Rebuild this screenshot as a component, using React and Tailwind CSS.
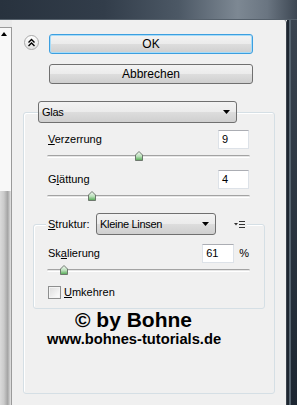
import React from 'react';

const btnBg =
  'bg-[linear-gradient(to_bottom,#f3f3f3_0%,#ebebeb_50%,#dddddd_51%,#cfcfcf_100%)]';

const ChevronsUp = () => (
  <svg width="9" height="9" viewBox="0 0 9 9" fill="none" stroke="#000" strokeWidth="1.4">
    <path d="M1.5 4.5 L4.5 1.5 L7.5 4.5" />
    <path d="M1.5 8 L4.5 5 L7.5 8" />
  </svg>
);

const DownArrow = () => (
  <svg width="7" height="4" viewBox="0 0 7 4">
    <path d="M0 0 H7 L3.5 4 Z" fill="#000" />
  </svg>
);

const MenuIcon = () => (
  <svg width="11" height="7" viewBox="0 0 11 7" className="block">
    <path d="M0 2 H4 L2 4.5 Z" fill="#333" />
    <rect x="5" y="0" width="6" height="1" fill="#333" />
    <rect x="5" y="3" width="6" height="1" fill="#333" />
    <rect x="5" y="6" width="6" height="1" fill="#333" />
  </svg>
);

const Thumb = () => (
  <svg width="8" height="10" viewBox="0 0 8 10" className="block">
    <defs>
      <linearGradient id="thumbFill" x1="0" y1="0" x2="0" y2="1">
        <stop offset="0" stopColor="#f6fbf6" />
        <stop offset="0.55" stopColor="#b9dfb9" />
        <stop offset="1" stopColor="#4fa84f" />
      </linearGradient>
    </defs>
    <path d="M4 0.5 L7.5 4 L7.5 9.5 L0.5 9.5 L0.5 4 Z" fill="url(#thumbFill)" stroke="#6e786e" />
  </svg>
);

// track is 203px wide, thumb travels over ~197px of it
const Slider = ({ value, min, max }) => {
  const center = 3 + ((value - min) / (max - min)) * 197;
  return (
    <div className="relative h-[14px]">
      <div className="absolute left-0 right-0 top-[6px] h-[3px] rounded-full border-t border-[#a3a3a3] bg-[#e6e6e6] border-b border-b-white" />
      <div className="absolute top-[2px]" style={{ left: center - 4 }}>
        <Thumb />
      </div>
    </div>
  );
};

const NumField = ({ value, w }) => (
  <div
    className={`${w} h-[19px] bg-white border border-[#dde2e8] border-t-[#abadb3] flex items-center pl-[3px]`}
  >
    {value}
  </div>
);

const Dropdown = ({ label, w }) => (
  <div
    className={`${w} h-[22px] ${btnBg} border border-[#707070] rounded-[3px] flex items-center justify-between pl-[3px] pr-[6px]`}
  >
    <span className="tracking-[-0.3px]">{label}</span>
    <DownArrow />
  </div>
);

export default function App() {
  return (
    <div className="w-[297px] h-[405px] overflow-hidden flex flex-col bg-[#f0f0f0] text-[11px] leading-[13px] text-black font-['Liberation_Sans',Arial,sans-serif]">
      {/* blurred window title area */}
      <div className="h-[20px] shrink-0 bg-[linear-gradient(90deg,#28323e_0%,#323d4a_35%,#4c5865_60%,#7d8893_80%,#6a7581_90%,#3d4753_100%)] border-b border-[#55606b]" />

      <div className="flex flex-1 min-h-0">
        {/* left strip */}
        <div className="w-[12px] flex flex-col">
          <div className="h-[7px] bg-[#ebebeb]" />
          <div className="flex-1 flex flex-col border-t border-r border-[#9a9a9a]">
            <div className="h-[163px] bg-[#f8f8f8]">
              <svg width="6" height="4" viewBox="0 0 6 4" className="block mt-[4px] ml-[1px]">
                <path d="M0 4 L3 0 L6 4 Z" fill="#000" />
              </svg>
            </div>
            <div className="flex-1 bg-[linear-gradient(90deg,#dadada_0%,#cbcbcb_35%,#a4a4a4_70%,#e4e4e4_100%)]" />
          </div>
        </div>

        {/* dialog */}
        <div className="w-[275px] border-r border-[#3b434c] rounded-tr-[3px] flex flex-col">
          <div className="flex pt-[14px] pl-[12px]">
            <div className="w-[15px] h-[15px] mt-[1px] rounded-full border border-[#a9a9a9] bg-[linear-gradient(to_bottom,#ffffff,#e2e2e2)] flex items-center justify-center">
              <ChevronsUp />
            </div>
            <div className="ml-[10px] w-[204px] flex flex-col gap-[10px] text-[12px]">
              <div
                className={`h-[20px] ${btnBg} border border-[#3c9fe0] rounded-[3px] shadow-[inset_0_0_0_1px_#a8dcf8] flex items-center justify-center`}
              >
                OK
              </div>
              <div
                className={`h-[20px] ${btnBg} border border-[#707070] rounded-[3px] flex items-center justify-center`}
              >
                Abbrechen
              </div>
            </div>
          </div>

          <div className="mt-[17px] ml-[11px] w-[252px]">
            <div className="relative z-10 ml-[15px]">
              <Dropdown label="Glas" w="w-[199px]" />
            </div>
            <div className="-mt-[11px] h-[282px] border border-[#d5dfe5] rounded-[3px] shadow-[inset_1px_1px_0_#ffffff]">
              <div className="pt-[17px] ml-[23px] w-[203px]">
                <div className="flex items-center justify-between h-[19px]">
                  <span className="pl-[1px]">
                    <span className="underline">V</span>erzerrung
                  </span>
                  <div className="mr-[1px]">
                    <NumField value="9" w="w-[31px]" />
                  </div>
                </div>
                <Slider value={9} min={0} max={20} />
                <div className="mt-[7px] flex items-center justify-between h-[19px]">
                  <span className="pl-[1px]">
                    G<span className="underline">l</span>ättung
                  </span>
                  <div className="mr-[1px]">
                    <NumField value="4" w="w-[31px]" />
                  </div>
                </div>
                <Slider value={4} min={1} max={15} />
              </div>

              <div className="mt-[10px] ml-[9px] w-[232px]">
                <div className="relative z-10 ml-[13px] w-fit flex items-center h-[22px] bg-[#f0f0f0] pr-[2px]">
                  <span className="w-[50px] pl-[2px]">
                    <span className="underline">S</span>truktur:
                  </span>
                  <Dropdown label="Kleine Linsen" w="w-[120px]" />
                  <div className="ml-[18px]">
                    <MenuIcon />
                  </div>
                </div>
                <div className="-mt-[11px] h-[85px] border border-[#d5dfe5] rounded-[3px] shadow-[inset_1px_1px_0_#ffffff]">
                  <div className="pt-[19px] ml-[13px] w-[203px]">
                    <div className="flex items-center justify-between h-[19px]">
                      <span className="pl-[1px]">
                        Sk<span className="underline">a</span>lierung
                      </span>
                      <div className="flex items-center gap-[5px] pr-[1px]">
                        <NumField value="61" w="w-[32px]" />
                        <span>%</span>
                      </div>
                    </div>
                    <Slider value={61} min={50} max={200} />
                    <div className="mt-[9px] flex items-center gap-[3px] pl-[1px]">
                      <div className="w-[13px] h-[13px] border border-[#8e8f8f] bg-[linear-gradient(135deg,#dcdcdc,#ffffff)] shadow-[inset_0_0_0_1px_#f4f4f4]" />
                      <span>
                        <span className="underline">U</span>mkehren
                      </span>
                    </div>
                  </div>
                </div>
              </div>

              <div className="ml-[51px] text-[21px] leading-[21px] font-bold">© by Bohne</div>
              <div className="mt-[2px] ml-[23px] text-[14.7px] leading-[15px] font-bold">
                www.bohnes-tutorials.de
              </div>
            </div>
          </div>
        </div>

        {/* window frame on the right */}
        <div className="w-[10px] flex">
          <div className="w-[2px] bg-[#1d2630]" />
          <div className="w-[2px] bg-[#566470]" />
          <div className="flex-1 bg-[linear-gradient(to_bottom,#3a4450,#1c2631)]" />
        </div>
      </div>
    </div>
  );
}
